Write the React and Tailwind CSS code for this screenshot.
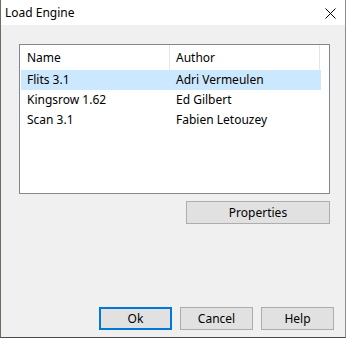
import { useState } from 'react';

const engines = [
  { name: 'Flits 3.1', author: 'Adri Vermeulen' },
  { name: 'Kingsrow 1.62', author: 'Ed Gilbert' },
  { name: 'Scan 3.1', author: 'Fabien Letouzey' },
];

function DlgButton({ children, primary, className = '' }) {
  return (
    <button
      className={`h-[23px] bg-[#e1e1e1] text-[12px] text-black flex items-center justify-center ${
        primary ? 'border-2 border-[#0078d7]' : 'border border-[#adadad]'
      } ${className}`}
    >
      {children}
    </button>
  );
}

export default function App() {
  const [selected, setSelected] = useState(0);

  return (
    <div
      className="w-[346px] h-[338px] flex flex-col border-l border-r border-b border-l-[#6f6a66] border-r-[#8c8c8c] border-b-[#4a4a4a] bg-[#f0f0f0] text-black"
      style={{ fontFamily: '"Noto Sans", "Open Sans", sans-serif' }}
    >
      {/* Title bar */}
      <div className="h-[25px] bg-white flex items-center justify-between pl-[4px] pr-[9px]">
        <span className="text-[12px] leading-none">Load Engine</span>
        <svg width="11" height="11" viewBox="0 0 11 11" className="mt-[1px]">
          <path d="M0.5 0.5 L10.5 10.5 M10.5 0.5 L0.5 10.5" stroke="#000" strokeWidth="1" />
        </svg>
      </div>

      {/* Body */}
      <div className="flex-1 flex flex-col pt-[19px] pb-[7px]">
        <div className="flex flex-col pl-[18px] pr-[15px]">
          {/* List view */}
          <div className="h-[150px] border border-[#828790] bg-white text-[12px]">
            <div className="flex h-[25px] items-center">
              <div className="w-[150px] h-full pl-[7px] flex items-center border-r border-[#e5e5e5]">Name</div>
              <div className="w-[150px] h-full pl-[6px] flex items-center border-r border-[#e5e5e5]">Author</div>
            </div>
            {engines.map((e, i) => (
              <div
                key={e.name}
                onClick={() => setSelected(i)}
                className={`ml-[1px] w-[300px] h-[20px] flex items-center ${i === selected ? 'bg-[#cce8ff]' : ''}`}
              >
                <div className="w-[149px] pl-[6px]">{e.name}</div>
                <div className="pl-[6px]">{e.author}</div>
              </div>
            ))}
          </div>

          <DlgButton className="self-end w-[144px] mt-[7px]">Properties</DlgButton>
        </div>

        <div className="mt-auto flex justify-end gap-[8px] pr-[11px]">
          <DlgButton primary className="w-[73px]">Ok</DlgButton>
          <DlgButton className="w-[73px]">Cancel</DlgButton>
          <DlgButton className="w-[73px]">Help</DlgButton>
        </div>
      </div>
    </div>
  );
}
